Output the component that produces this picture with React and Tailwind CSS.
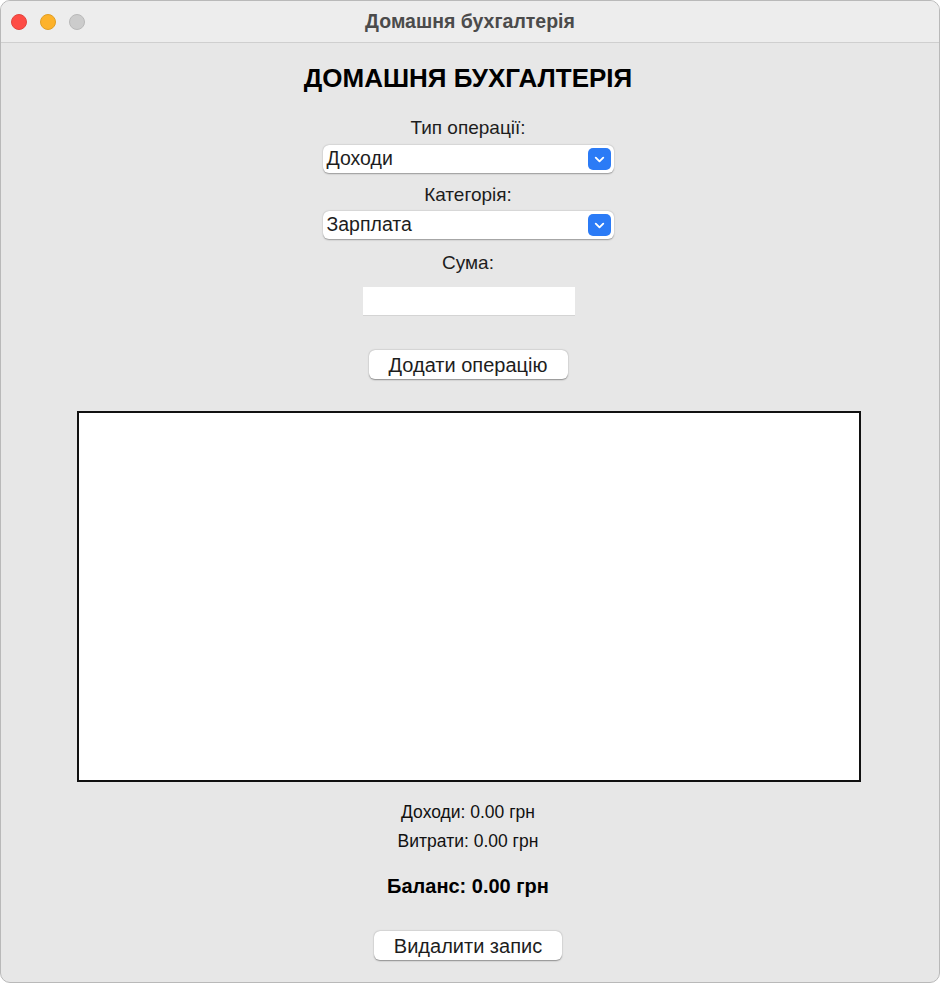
import { ChevronDown } from 'lucide-react';

const font = { fontFamily: '"Liberation Sans", Arial, sans-serif' };

const Select = ({ value }) => (
    <div className="w-[291px] h-[28px] bg-white rounded-[6px] shadow-[0_0.5px_1.5px_rgba(0,0,0,0.35)] flex items-center justify-between pl-[4px] pr-[3px]">
        <span className="text-[19.5px] text-[#1d1d1d]">{value}</span>
        <div className="w-[23px] h-[22px] rounded-[5px] bg-[#2b7bf6] flex items-center justify-center">
            <ChevronDown size={15} strokeWidth={3} color="white" />
        </div>
    </div>
);

const Button = ({ label, width }) => (
    <button className={`${width} h-[29px] bg-white rounded-[6px] shadow-[0_0.5px_1.5px_rgba(0,0,0,0.4)] text-[20px] leading-none text-[#1d1d1d]`}>
        {label}
    </button>
);

export default function App() {
    return (
        <div className="w-[940px] h-[983px] bg-white" style={font}>
            <div className="w-full h-full rounded-[10px] border border-[#b9b9b9] bg-[#e7e7e7] overflow-hidden flex flex-col">
                {/* title bar */}
                <div className="h-[42px] shrink-0 bg-[#ededed] border-b border-[#cfcfcf] flex items-center relative">
                    <div className="flex gap-[13px] pl-[10px]">
                        <span className="w-[16px] h-[16px] rounded-full bg-[#fe4c45] border border-[#e2443d]" />
                        <span className="w-[16px] h-[16px] rounded-full bg-[#fdb22a] border border-[#e09e24]" />
                        <span className="w-[16px] h-[16px] rounded-full bg-[#cccccc] border border-[#b9b9b9]" />
                    </div>
                    <div className="absolute inset-0 flex items-center justify-center text-[19.5px] font-bold text-[#4b4b4b] pointer-events-none">
                        Домашня бухгалтерія
                    </div>
                </div>

                <div className="flex flex-col items-center pr-[4px]">
                    <h1 className="mt-[20px] text-[26px] font-bold text-black leading-[30px]">ДОМАШНЯ БУХГАЛТЕРІЯ</h1>

                    <div className="mt-[23px] text-[19px] leading-[24px] text-[#1d1d1d]">Тип операції:</div>
                    <div className="mt-[5px]"><Select value="Доходи" /></div>

                    <div className="mt-[10px] text-[19px] leading-[24px] text-[#1d1d1d]">Категорія:</div>
                    <div className="mt-[4px]"><Select value="Зарплата" /></div>

                    <div className="mt-[12px] text-[19px] leading-[24px] text-[#1d1d1d]">Сума:</div>
                    <input className="mt-[12px] ml-[2px] w-[212px] h-[29px] bg-white border-b border-[#d4d4d4] outline-none" />

                    <div className="mt-[34px] h-[29px]"><Button label="Додати операцію" width="w-[199px]" /></div>

                    <div className="mt-[32px] ml-[1px] w-[784px] h-[371px] bg-white border-2 border-[#111]" />

                    <div className="mt-[19px] text-[17.5px] leading-[22px] text-[#111]">Доходи: 0.00 грн</div>
                    <div className="mt-[7px] text-[17.5px] leading-[22px] text-[#111]">Витрати: 0.00 грн</div>
                    <div className="mt-[21px] text-[20px] font-bold leading-[26px] text-black">Баланс: 0.00 грн</div>

                    <div className="mt-[32px] h-[29px]"><Button label="Видалити запис" width="w-[188px]" /></div>
                </div>
            </div>
        </div>
    );
}
